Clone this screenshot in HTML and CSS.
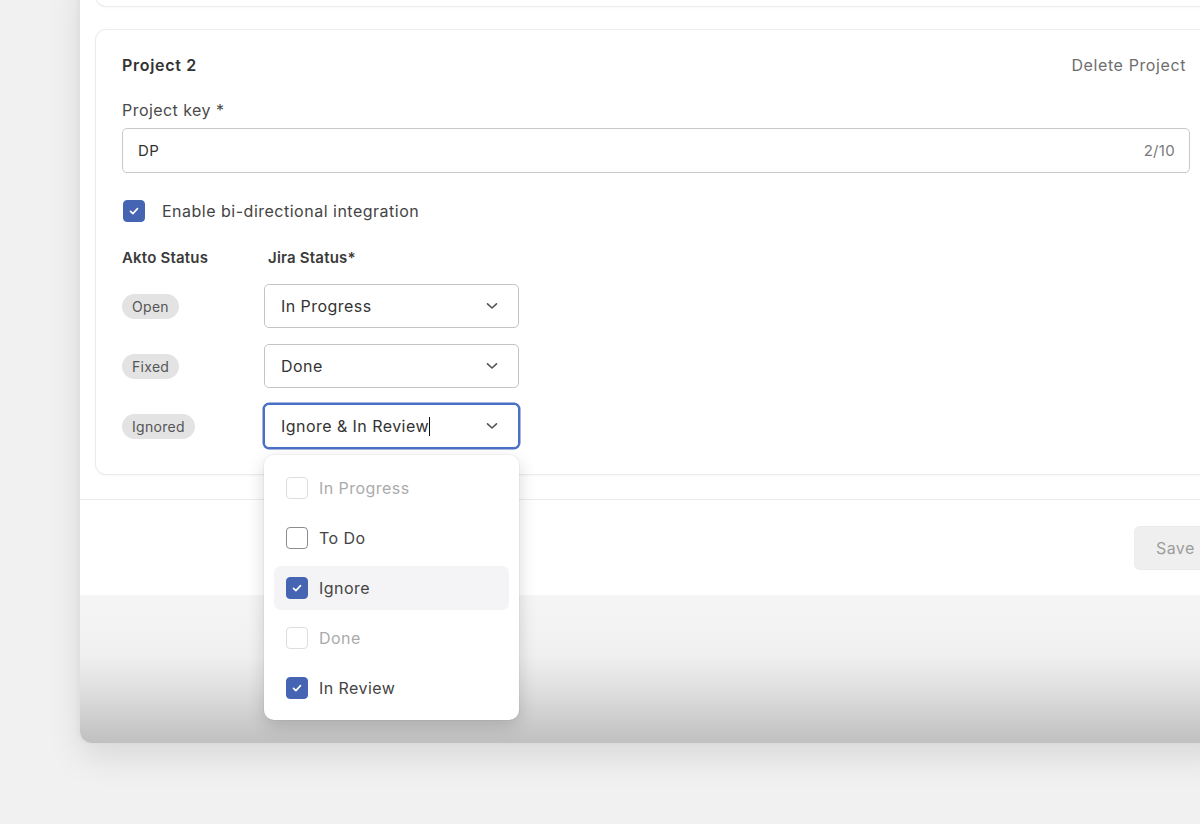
FILE: index.html
```html
<!DOCTYPE html>
<html>
<head>
<meta charset="utf-8">
<link rel="stylesheet" href="styles.css">
</head>
<body>
<div class="modal">
  <div class="modal-body">
    <div class="card prev"></div>
    <div class="card project">
      <div class="proj-head">
        <span class="proj-title">Project 2</span>
        <span class="delete">Delete Project</span>
      </div>
      <div class="label">Project key *</div>
      <div class="text-input">
        <span class="value">DP</span>
        <span class="count">2/10</span>
      </div>
      <div class="check-row">
        <span class="cb checked"><svg viewBox="0 0 20 20"><path d="M6.5 10.3 L8.9 12.6 L13.5 7.6"/></svg></span>
        <span class="check-label">Enable bi-directional integration</span>
      </div>
      <div class="status-grid">
        <div class="col-head">Akto Status</div>
        <div class="col-head jira">Jira Status*</div>

        <div class="pill-cell"><span class="pill">Open</span></div>
        <div class="select"><span>In Progress</span><svg class="chev" viewBox="0 0 12 8"><path d="M1.5 1.8 L6 6 L10.5 1.8"/></svg></div>

        <div class="pill-cell"><span class="pill">Fixed</span></div>
        <div class="select"><span>Done</span><svg class="chev" viewBox="0 0 12 8"><path d="M1.5 1.8 L6 6 L10.5 1.8"/></svg></div>

        <div class="pill-cell"><span class="pill">Ignored</span></div>
        <div class="select-wrap">
          <div class="select focus"><span>Ignore &amp; In Review<i class="caret"></i></span><svg class="chev" viewBox="0 0 12 8"><path d="M1.5 1.8 L6 6 L10.5 1.8"/></svg></div>
          <div class="dropdown">
            <div class="opt disabled"><span class="cb"></span><span>In Progress</span></div>
            <div class="opt"><span class="cb"></span><span>To Do</span></div>
            <div class="opt hover"><span class="cb checked"><svg viewBox="0 0 20 20"><path d="M6.5 10.3 L8.9 12.6 L13.5 7.6"/></svg></span><span>Ignore</span></div>
            <div class="opt disabled"><span class="cb"></span><span>Done</span></div>
            <div class="opt"><span class="cb checked"><svg viewBox="0 0 20 20"><path d="M6.5 10.3 L8.9 12.6 L13.5 7.6"/></svg></span><span>In Review</span></div>
          </div>
        </div>
      </div>
    </div>
  </div>
  <div class="modal-footer">
    <button class="save">Save</button>
  </div>
  <div class="modal-bottom"></div>
</div>
</body>
</html>
```
FILE: styles.css
```css
* { box-sizing: border-box; }
html, body { margin: 0; padding: 0; }
body {
  width: 1200px;
  height: 824px;
  overflow: hidden;
  background: #f1f1f1;
  font-family: "Inter", "Liberation Sans", sans-serif;
  color: #3a3a3a;
}
.modal {
  margin-left: 80px;
  width: 1152px;
  border-radius: 0 0 12px 12px;
  box-shadow: 0 14px 34px rgba(0,0,0,0.10), -2px 0 6px rgba(0,0,0,0.03);
  position: relative;
}
.modal-body {
  background: #fff;
  padding: 0 16px 25px 16px;
  border-bottom: 1px solid #ebebeb;
}
.card {
  background: #fff;
  border-radius: 10px;
  box-shadow: 0 0 0 1px #ececec, 0 1px 3px rgba(0,0,0,0.07);
}
.card.prev {
  height: 36px;
  margin-top: -30px;
  margin-bottom: 24px;
}
.card.project {
  padding: 25px 26px 26px 26px;
}
.proj-head {
  display: flex;
  justify-content: space-between;
  align-items: center;
  line-height: 20px;
  padding-right: 4px;
}
.proj-title {
  font-size: 16px;
  font-weight: 600;
  letter-spacing: 0.7px;
  color: #333;
}
.delete {
  font-size: 16px;
  letter-spacing: 0.6px;
  color: #6e6e6e;
}
.label {
  margin-top: 25px;
  font-size: 16px;
  letter-spacing: 0.45px;
  line-height: 20px;
  color: #4a4a4a;
}
.text-input {
  margin-top: 8px;
  height: 45px;
  border: 1px solid #c9c9c9;
  border-radius: 5px;
  display: flex;
  align-items: center;
  justify-content: space-between;
  padding: 0 14px 0 15px;
  font-size: 15px;
  letter-spacing: 0.3px;
}
.text-input .value { color: #333; }
.text-input .count { color: #7a7a7a; }
.check-row {
  margin-top: 27px;
  display: flex;
  align-items: center;
  gap: 17px;
  height: 22px;
  padding-left: 1px;
}
.check-label {
  font-size: 16px;
  letter-spacing: 0.5px;
  color: #444;
}
.cb {
  width: 22px;
  height: 22px;
  flex: 0 0 22px;
  border-radius: 4px;
  border: 1.5px solid #8c8c8c;
  display: flex;
  align-items: center;
  justify-content: center;
  background: #fff;
}
.cb.checked {
  background: #4565b3;
  border-color: #4565b3;
}
.cb svg {
  width: 20px;
  height: 20px;
  fill: none;
  stroke: #fff;
  stroke-width: 1.6;
  stroke-linecap: round;
  stroke-linejoin: round;
}
.status-grid {
  margin-top: 26px;
  display: grid;
  grid-template-columns: 142px 255px;
  grid-auto-rows: 44px;
  row-gap: 16px;
  grid-template-rows: 20px;
}
.col-head {
  font-size: 15px;
  font-weight: 600;
  letter-spacing: 0.2px;
  color: #3a3a3a;
  line-height: 20px;
}
.col-head.jira { padding-left: 4px; }
.pill-cell {
  display: flex;
  align-items: center;
}
.pill {
  display: inline-block;
  background: #e3e3e3;
  border-radius: 13px;
  padding: 0 10px;
  height: 25px;
  line-height: 25px;
  font-size: 14px;
  letter-spacing: 0.3px;
  color: #555;
}
.select {
  height: 44px;
  border: 1px solid #c4c4c4;
  border-radius: 5px;
  display: flex;
  align-items: center;
  justify-content: space-between;
  padding: 0 20px 0 16px;
  font-size: 16px;
  letter-spacing: 0.45px;
  color: #333;
  background: #fff;
}
.select.focus {
  border-color: #4a70c6;
  box-shadow: 0 0 0 1.5px #4a70c6;
}
.caret {
  display: inline-block;
  width: 1.5px;
  height: 19px;
  background: #111;
  vertical-align: -4px;
}
.chev {
  width: 12px;
  height: 8px;
  fill: none;
  stroke: #555;
  stroke-width: 1.6;
  stroke-linecap: round;
  stroke-linejoin: round;
}
.select-wrap { position: relative; }
.dropdown {
  position: absolute;
  left: 0;
  top: 51px;
  width: 255px;
  background: #fff;
  border-radius: 10px;
  box-shadow: 0 6px 18px rgba(0,0,0,0.16), 0 0 0 1px rgba(0,0,0,0.03);
  padding: 11px 10px 10px 10px;
  display: flex;
  flex-direction: column;
  gap: 6px;
  z-index: 5;
}
.opt {
  height: 44px;
  display: flex;
  align-items: center;
  gap: 11px;
  padding-left: 12px;
  border-radius: 7px;
  font-size: 16px;
  letter-spacing: 0.45px;
  color: #444;
}
.opt.hover { background: #f4f4f6; }
.opt.disabled { color: #ababab; }
.opt.disabled .cb { border-color: #dedede; }
.modal-footer {
  background: #fff;
  padding: 27px 16px 26px 16px;
  display: flex;
  justify-content: flex-end;
}
.save {
  height: 42px;
  width: 81px;
  border: none;
  border-radius: 5px;
  background: #efefef;
  color: #9d9d9d;
  font-family: inherit;
  font-size: 16px;
  letter-spacing: 0.4px;
  text-align: left;
  padding: 0 0 0 21px;
  box-shadow: 0 0 0 1px #ebebeb;
}
.modal-bottom {
  height: 148px;
  border-radius: 0 0 12px 12px;
  background: linear-gradient(to bottom, #f5f5f5 0px, #f0f0f0 60px, #dcdcdc 100px, #c4c4c4 140px, #c0c0c0 148px);
}
```
